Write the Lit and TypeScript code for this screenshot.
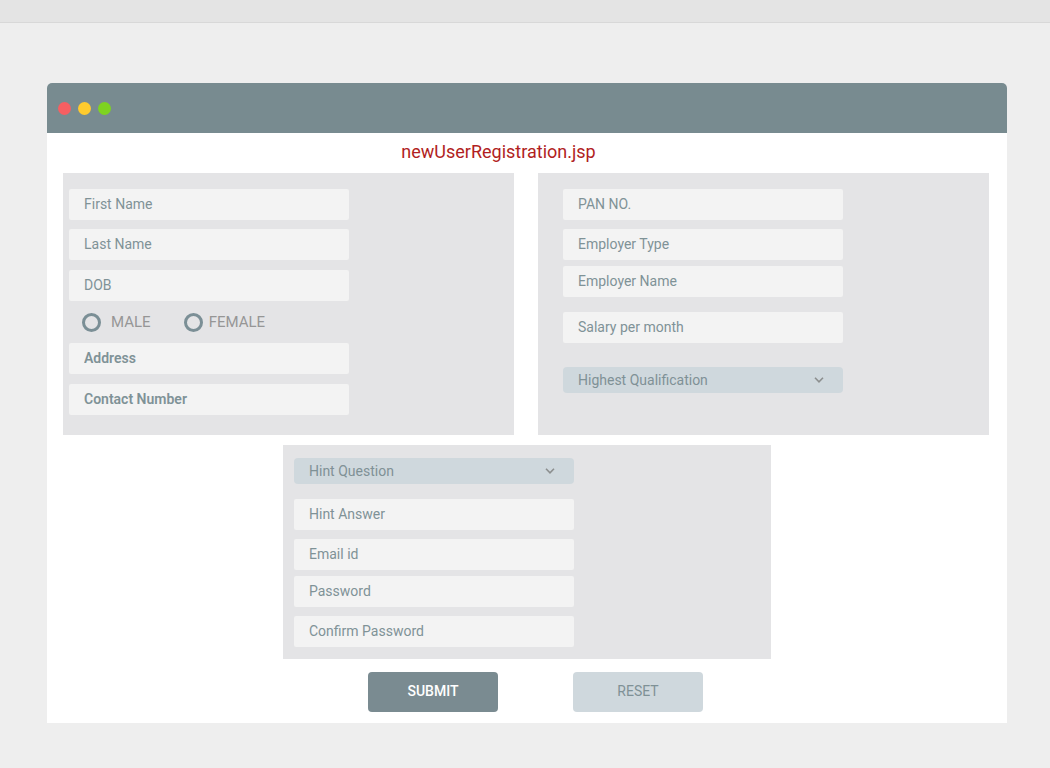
import { LitElement, html, css } from "lit";
import { customElement, property } from "lit/decorators.js";
import { classMap } from "lit/directives/class-map.js";

type Gap = "none" | "tight" | "normal" | "medium" | "wide" | "loose";

const shared = css`
  :host {
    display: block;
  }
  :host([gap="tight"]) {
    margin-top: 6px;
  }
  :host([gap="normal"]) {
    margin-top: 9px;
  }
  :host([gap="medium"]) {
    margin-top: 10px;
  }
  :host([gap="wide"]) {
    margin-top: 15px;
  }
  :host([gap="loose"]) {
    margin-top: 24px;
  }
  * {
    box-sizing: border-box;
  }
`;

@customElement("text-field")
class TextField extends LitElement {
  @property() label = "";
  @property() type = "text";
  @property({ type: Boolean }) strong = false;
  @property({ reflect: true }) gap: Gap = "normal";

  static styles = [
    shared,
    css`
      .input {
        display: block;
        width: 100%;
        height: 31px;
        padding: 0 15px 1px;
        border: 0;
        border-radius: 2px;
        outline-color: #7a8c92;
        background: #f3f3f3;
        color: #788b91;
        font: 400 14px/18px Roboto, sans-serif;
      }
      .input::placeholder {
        color: #7f9297;
        opacity: 1;
      }
      .strong {
        font-weight: 600;
      }
    `,
  ];

  render() {
    return html`<input
      class=${classMap({ input: true, strong: this.strong })}
      type=${this.type}
      placeholder=${this.label}
      aria-label=${this.label}
    />`;
  }
}

@customElement("select-field")
class SelectField extends LitElement {
  @property() label = "";
  @property({ reflect: true }) gap: Gap = "none";

  static styles = [
    shared,
    css`
      .wrap {
        display: grid;
        align-items: center;
      }
      .select,
      .arrow {
        grid-area: 1 / 1;
      }
      .select {
        appearance: none;
        width: 100%;
        height: 26px;
        padding: 0 40px 0 15px;
        border: 0;
        border-radius: 4px;
        outline-color: #7a8c92;
        background: #cfd8dd;
        color: #7f9196;
        font: 400 14px/18px Roboto, sans-serif;
      }
      .arrow {
        justify-self: end;
        width: 10px;
        height: 6px;
        margin-right: 19px;
        fill: none;
        stroke: #8c8f8f;
        stroke-width: 1.6;
        pointer-events: none;
      }
    `,
  ];

  render() {
    return html`<div class="wrap">
      <select class="select" aria-label=${this.label}>
        <option>${this.label}</option>
      </select>
      <svg class="arrow" viewBox="0 0 10 6" aria-hidden="true">
        <path d="M1 .8 5 4.8 9 .8" />
      </svg>
    </div>`;
  }
}

@customElement("app-root")
class AppRoot extends LitElement {
  static styles = css`
    :host {
      display: block;
      min-height: 100vh;
      background: #eeeeee;
      font-family: Roboto, sans-serif;
    }
    * {
      box-sizing: border-box;
    }
    .strip {
      height: 23px;
      background: #e4e4e4;
      border-bottom: 1px solid #d8d8d8;
    }
    .window {
      margin: 60px 43px 0 47px;
      padding-bottom: 11px;
      border-radius: 5px 5px 0 0;
      background: #ffffff;
    }
    .titlebar {
      display: flex;
      align-items: center;
      gap: 7px;
      height: 50px;
      padding: 0 11px;
      border-radius: 5px 5px 0 0;
      background: #788b90;
    }
    .dot {
      width: 13px;
      height: 13px;
      border-radius: 50%;
    }
    .red {
      background: #f65f62;
    }
    .yellow {
      background: #ffcb2d;
    }
    .green {
      background: #7ed321;
    }
    .title {
      margin: 0;
      padding: 7px 57px 9px 0;
      color: #b11e22;
      font-size: 18px;
      font-weight: 400;
      line-height: 24px;
      text-align: center;
    }
    .columns {
      display: grid;
      grid-template-columns: 1fr 1fr;
      gap: 24px;
      padding: 0 18px 0 16px;
    }
    .panel {
      background: #e4e4e6;
    }
    .personal {
      padding: 16px 6px 20px;
    }
    .work {
      padding: 16px 25px 20px;
    }
    .security {
      width: 488px;
      max-width: 100%;
      margin: 10px auto 0;
      padding: 13px 11px 12px;
    }
    .fields {
      max-width: 280px;
    }
    .genders {
      display: flex;
      align-items: center;
      gap: 33px;
      height: 24px;
      margin: 9px 0 0;
      padding: 0 13px;
      border: 0;
    }
    .gender {
      display: flex;
      align-items: center;
      color: #969696;
      font-size: 15px;
      line-height: 20px;
    }
    .radio {
      appearance: none;
      width: 19px;
      height: 19px;
      margin: 0;
      border: 3px solid #7b8f96;
      border-radius: 50%;
    }
    .radio:checked {
      background: radial-gradient(#7b8f96 0 4px, transparent 5px);
    }
    .male {
      gap: 10px;
    }
    .female {
      gap: 6px;
    }
    .actions {
      display: flex;
      justify-content: center;
      gap: 75px;
      padding: 13px 0 0 17px;
    }
    .button {
      width: 130px;
      height: 40px;
      padding: 0 0 2px;
      border: 0;
      border-radius: 4px;
      font: 400 14px/18px Roboto, sans-serif;
      cursor: pointer;
    }
    .submit {
      background: #7a8b91;
      color: #ffffff;
      font-weight: 500;
    }
    .reset {
      background: #cfd8dd;
      color: #7f9196;
    }
  `;

  render() {
    return html`
      <div class="strip"></div>
      <main class="window">
        <div class="titlebar">
          <span class="dot red"></span>
          <span class="dot yellow"></span>
          <span class="dot green"></span>
        </div>
        <h1 class="title">newUserRegistration.jsp</h1>
        <form>
          <div class="columns">
            <section class="panel personal">
              <div class="fields">
                <text-field label="First Name" gap="none"></text-field>
                <text-field label="Last Name"></text-field>
                <text-field label="DOB" gap="medium"></text-field>
                <div class="genders" role="radiogroup" aria-label="Gender">
                  <label class="gender male">
                    <input class="radio" type="radio" name="gender" value="male" />MALE
                  </label>
                  <label class="gender female">
                    <input class="radio" type="radio" name="gender" value="female" />FEMALE
                  </label>
                </div>
                <text-field label="Address" strong></text-field>
                <text-field label="Contact Number" gap="medium" strong></text-field>
              </div>
            </section>
            <section class="panel work">
              <div class="fields">
                <text-field label="PAN NO." gap="none"></text-field>
                <text-field label="Employer Type"></text-field>
                <text-field label="Employer Name" gap="tight"></text-field>
                <text-field label="Salary per month" gap="wide"></text-field>
                <select-field label="Highest Qualification" gap="loose"></select-field>
              </div>
            </section>
          </div>
          <section class="panel security">
            <div class="fields">
              <select-field label="Hint Question"></select-field>
              <text-field label="Hint Answer" gap="wide"></text-field>
              <text-field label="Email id" type="email"></text-field>
              <text-field label="Password" type="password" gap="tight"></text-field>
              <text-field label="Confirm Password" type="password"></text-field>
            </div>
          </section>
          <div class="actions">
            <button class="button submit" type="submit">SUBMIT</button>
            <button class="button reset" type="reset">RESET</button>
          </div>
        </form>
      </main>
    `;
  }
}
